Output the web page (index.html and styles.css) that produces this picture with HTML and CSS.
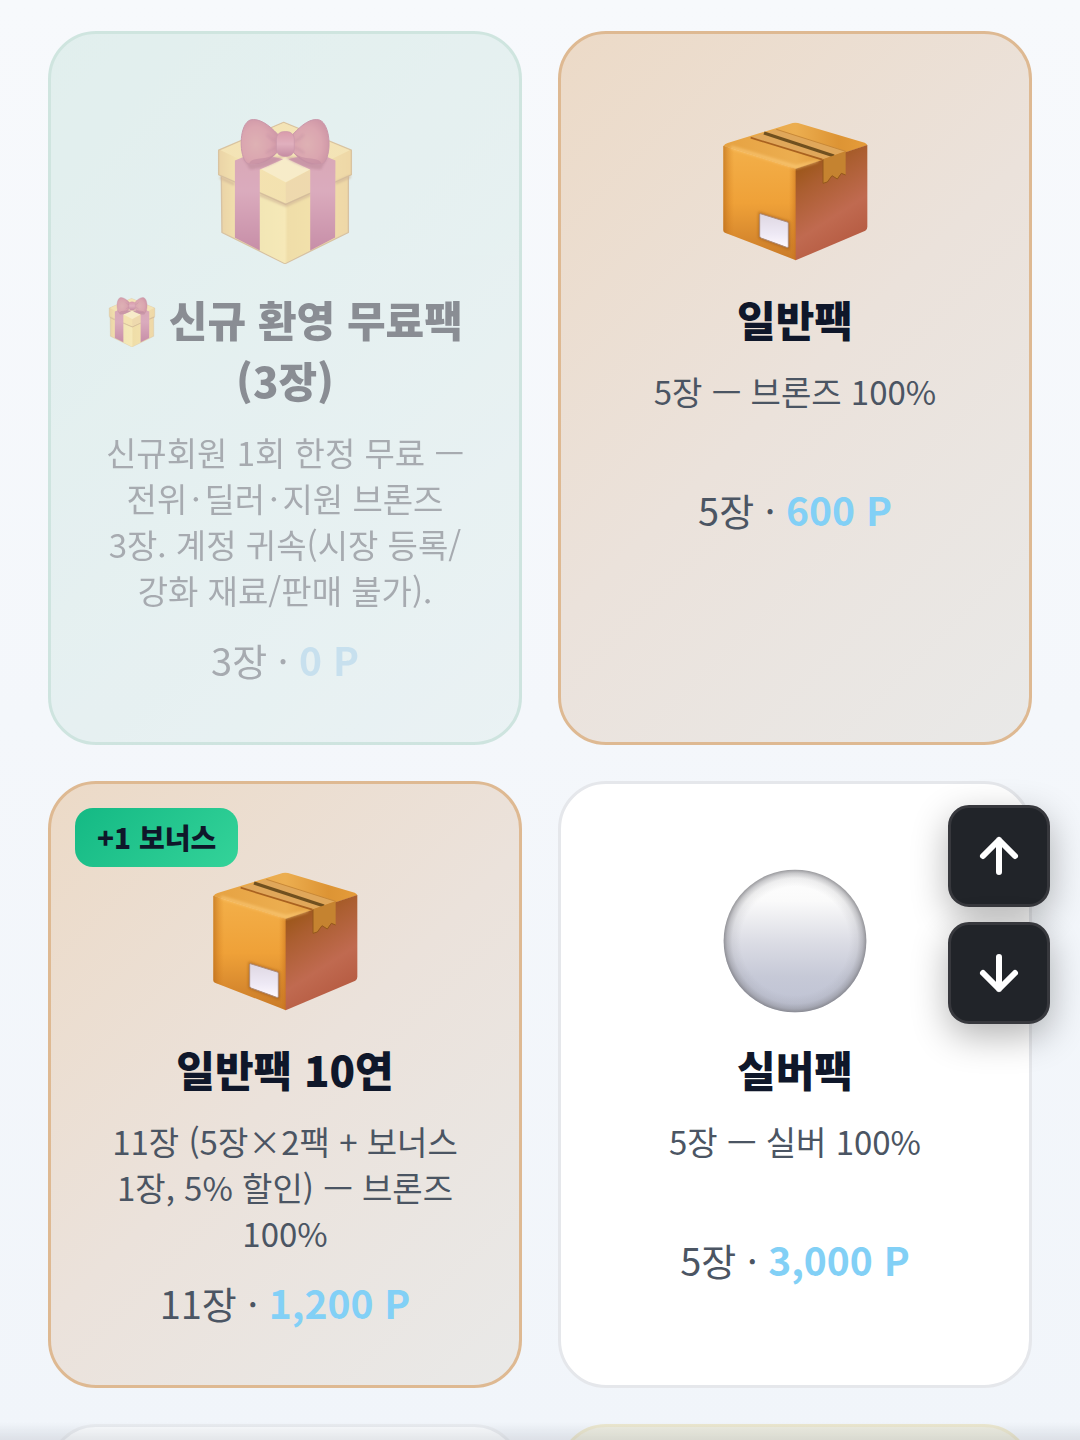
FILE: index.html
```html
<!DOCTYPE html>
<html lang="ko">
<head>
    <meta charset="UTF-8">
    <meta name="viewport" content="width=device-width, initial-scale=1.0">
    <title>팩 상점</title>
    <link rel="stylesheet" href="styles.css">
</head>
<body>
    <!-- Shared pack icons -->
    <svg class="icon-defs" width="0" height="0" aria-hidden="true">
        <defs>
            <linearGradient id="giftSide" x1="0" y1="0" x2="1" y2="0">
                <stop offset="0" stop-color="#e0b054"/>
                <stop offset=".15" stop-color="#f2cf66"/>
                <stop offset=".5" stop-color="#f3d26c"/>
                <stop offset="1" stop-color="#e8b854"/>
            </linearGradient>
            <linearGradient id="giftFront" x1="0" y1="0" x2="1" y2="0">
                <stop offset="0" stop-color="#efd570"/>
                <stop offset=".5" stop-color="#f6da76"/>
                <stop offset=".56" stop-color="#eac458"/>
                <stop offset="1" stop-color="#efca5c"/>
            </linearGradient>
            <linearGradient id="ribbon" x1="0" y1="0" x2="0" y2="1">
                <stop offset="0" stop-color="#bd5a74"/>
                <stop offset=".4" stop-color="#c06080"/>
                <stop offset="1" stop-color="#9a2757"/>
            </linearGradient>
            <radialGradient id="bowLeft" cx=".4" cy=".55" r=".65">
                <stop offset="0" stop-color="#c76c6e"/>
                <stop offset=".6" stop-color="#c05566"/>
                <stop offset="1" stop-color="#a63552"/>
            </radialGradient>
            <linearGradient id="knot" x1="0" y1="0" x2="0" y2="1">
                <stop offset="0" stop-color="#bd425e"/>
                <stop offset=".5" stop-color="#cc6a82"/>
                <stop offset="1" stop-color="#96234d"/>
            </linearGradient>
            <linearGradient id="boxLeft" x1="0" y1="0" x2="0" y2="1">
                <stop offset="0" stop-color="#f3b04a"/>
                <stop offset=".5" stop-color="#efa138"/>
                <stop offset="1" stop-color="#c97a28"/>
            </linearGradient>
            <linearGradient id="boxEdge" x1="0" y1="0" x2="1" y2="0">
                <stop offset="0" stop-color="#b36517" stop-opacity=".6"/>
                <stop offset=".15" stop-color="#d98321" stop-opacity="0"/>
                <stop offset=".9" stop-color="#d98321" stop-opacity="0"/>
                <stop offset="1" stop-color="#c56b18" stop-opacity=".55"/>
            </linearGradient>
            <linearGradient id="boxRight" x1=".2" y1="0" x2=".6" y2="1">
                <stop offset="0" stop-color="#94520c"/>
                <stop offset=".3" stop-color="#ab5e30"/>
                <stop offset=".65" stop-color="#c06a50"/>
                <stop offset="1" stop-color="#b4583f"/>
            </linearGradient>
            <linearGradient id="boxTop" x1="0" y1="0" x2="1" y2="0">
                <stop offset="0" stop-color="#e6a242"/>
                <stop offset=".5" stop-color="#ecae50"/>
                <stop offset=".8" stop-color="#dd9434"/>
                <stop offset="1" stop-color="#e59c3a"/>
            </linearGradient>
            <linearGradient id="boxLabel" x1="0" y1="0" x2="0" y2="1">
                <stop offset="0" stop-color="#ded7e2"/>
                <stop offset=".6" stop-color="#eee9f5"/>
                <stop offset="1" stop-color="#fffaff"/>
            </linearGradient>
            <linearGradient id="ballFill" x1="0" y1="0" x2="0" y2="1">
                <stop offset="0" stop-color="#ffffff"/>
                <stop offset=".22" stop-color="#fafafa"/>
                <stop offset=".5" stop-color="#dcdde5"/>
                <stop offset=".75" stop-color="#c6c9d7"/>
                <stop offset="1" stop-color="#bec2d3"/>
            </linearGradient>
            <radialGradient id="ballRim">
                <stop offset=".76" stop-color="#808086" stop-opacity="0"/>
                <stop offset=".88" stop-color="#808086" stop-opacity=".13"/>
                <stop offset=".95" stop-color="#808086" stop-opacity=".42"/>
                <stop offset="1" stop-color="#77777c" stop-opacity=".75"/>
            </radialGradient>
            <filter id="soften"><feGaussianBlur stdDeviation="4"/></filter>
        </defs>

        <symbol id="icon-gift" viewBox="36 52 440 440">
            <path fill="url(#giftSide)" stroke="#b98d4c" stroke-width="4" stroke-linejoin="round" d="M64 225 256 120 447 225V397L256 491 66 397Z"/>
            <path fill="url(#giftFront)" d="M176 275 257 315 334 275V449L256 490 176 449Z"/>
            <path fill="url(#giftSide)" stroke="#bd9048" stroke-width="4" stroke-linejoin="round" d="M56 149 252 65 456 149V223L258 312 56 223Z"/>
            <path fill="none" stroke="#a86f30" stroke-opacity=".65" stroke-width="9" filter="url(#soften)" d="M60 231 104 252M178 282 259 315 333 282M408 248 454 228"/>
            <path fill="#f2d072" d="M62 149 252 67 451 149 258 244Z"/>
            <path fill="#f2cc66" d="M180 205 258 247V308L180 273Z"/>
            <path fill="#e8bb62" d="M258 247 332 207V274L258 308Z"/>
            <path fill="#f8e098" d="M182 205 258 170 331 207 258 246Z"/>
            <path fill="url(#ribbon)" d="M105 180 165 155 250 176 180 207V451L105 413ZM408 180 350 155 266 176 332 207V451L407 412Z"/>
            <path fill="#8c2444" fill-opacity=".65" filter="url(#soften)" d="M128 170 150 207Q210 203 254 168 310 207 365 207L385 170Z"/>
            <path fill="url(#bowLeft)" stroke="#9d375a" stroke-width="3" d="M234 101C207 72 177 51 151 58 120 70 116 153 137 184 147 197 178 192 194 183 211 174 226 164 234 153Z"/>
            <path fill="url(#bowLeft)" stroke="#9d375a" stroke-width="3" d="M280 101C307 72 334 51 360 58 391 70 398 151 376 184 366 197 340 191 320 184 303 175 287 163 280 153Z"/>
            <path fill="#8f2248" fill-opacity=".6" d="M148 190Q150 177 180 174 210 174 231 157 210 183 176 191ZM366 190Q363 177 335 174 304 174 281 157 303 185 337 192Z"/>
            <path fill="none" stroke="#8f2248" stroke-opacity=".4" stroke-width="7" filter="url(#soften)" d="M231 122Q211 116 202 101M231 141Q211 147 200 158M283 122Q303 115 312 101M283 141Q303 147 313 158"/>
            <rect fill="url(#knot)" stroke="#9d375a" stroke-width="2" x="230" y="93" width="54" height="75" rx="22"/>
        </symbol>

        <symbol id="icon-box" viewBox="53 39 438 438">
            <path fill="url(#boxTop)" d="M58 123Q60 117 70 114L265 54Q273 52 281 54L481 113Q488 116 489 121L275 192Z"/>
            <path fill="url(#boxLeft)" d="M57 122 275 191V466L62 383Q57 381 57 375Z"/>
            <path fill="url(#boxEdge)" d="M57 122 275 191V466L62 383Q57 381 57 375Z"/>
            <path fill="url(#boxRight)" d="M274 191 489 120V366Q489 373 483 377L274 466Z"/>
            <path fill="#fccb78" fill-opacity=".75" filter="url(#soften)" d="M80 122 275 181 345 164 338 172 275 191 80 131Z"/>
            <path fill="#e0a75a" d="M139 98 216 73 424 139 356 163Z"/>
            <path fill="none" stroke="#a96220" stroke-width="5" d="M139 98 354 164"/>
            <path fill="none" stroke="#70501f" stroke-width="10" d="M179 84 389 153"/>
            <path fill="none" stroke="#c88837" stroke-width="3" d="M216 73 424 139"/>
            <path fill="#c58330" d="M356 163 424 139V210L411 205 399 222 383 212 369 231 356 235Z"/>
            <path fill="none" stroke="#94581c" stroke-width="3" d="M356 163V235L369 231 383 212 399 222 411 205 424 210"/>
            <path fill="#9a5718" fill-opacity=".7" filter="url(#soften)" d="M163 321 256 350V434L163 400Z"/>
            <path fill="url(#boxLabel)" stroke="#ae8b79" stroke-width="3" d="M168 326 249 351Q252 352 252 356V424Q252 429 247 427L170 399Q166 397 166 393V329Z"/>
        </symbol>

        <symbol id="icon-ball" viewBox="52 50 438 438">
            <circle cx="271" cy="269" r="214" fill="url(#ballFill)"/>
            <circle cx="271" cy="269" r="214" fill="url(#ballRim)"/>
        </symbol>
    </svg>

    <main class="pack-grid">
        <article class="pack pack-free disabled">
            <svg class="pack-icon" aria-hidden="true"><use href="#icon-gift"/></svg>
            <h2 class="pack-name"><svg class="name-icon" aria-hidden="true"><use href="#icon-gift"/></svg> 신규 환영 무료팩 (3장)</h2>
            <p class="pack-desc">신규회원 1회 한정 무료 — 전위<span class="dot">·</span>딜러<span class="dot">·</span>지원 브론즈 3장. 계정 귀속(시장 등록/강화 재료/판매 불가).</p>
            <p class="pack-price">3장 · <strong>0 P</strong></p>
        </article>

        <article class="pack pack-bronze">
            <svg class="pack-icon" aria-hidden="true"><use href="#icon-box"/></svg>
            <h2 class="pack-name">일반팩</h2>
            <p class="pack-desc">5장 — 브론즈 100%</p>
            <p class="pack-price">5장 · <strong>600 P</strong></p>
        </article>

        <article class="pack pack-bronze">
            <span class="badge">+1 보너스</span>
            <svg class="pack-icon" aria-hidden="true"><use href="#icon-box"/></svg>
            <h2 class="pack-name">일반팩 10연</h2>
            <p class="pack-desc">11장 (5장×2팩 + 보너스 1장, 5% 할인) — 브론즈 100%</p>
            <p class="pack-price">11장 · <strong>1,200 P</strong></p>
        </article>

        <article class="pack">
            <svg class="pack-icon" aria-hidden="true"><use href="#icon-ball"/></svg>
            <h2 class="pack-name">실버팩</h2>
            <p class="pack-desc">5장 — 실버 100%</p>
            <p class="pack-price">5장 · <strong>3,000 P</strong></p>
        </article>

        <!-- Next row, still fading in -->
        <article class="pack entering"></article>
        <article class="pack pack-gold entering"></article>
    </main>

    <div class="scroll-buttons">
        <button type="button" class="scroll-button" aria-label="위로">
            <svg viewBox="0 0 48 48" aria-hidden="true"><path d="M24 40V8M8 24 24 8l16 16"/></svg>
        </button>
        <button type="button" class="scroll-button" aria-label="아래로">
            <svg viewBox="0 0 48 48" aria-hidden="true"><path d="M24 8v32M8 24l16 16 16-16"/></svg>
        </button>
    </div>

    <div class="bottom-shade"></div>
</body>
</html>
```
FILE: styles.css
```css
* {
    box-sizing: border-box;
}

body {
    margin: 0;
    font-family: "Noto Sans CJK KR", "Noto Sans", sans-serif;
    color: #0f172a;
    background: linear-gradient(180deg, #f7f9fc, #f1f5fa);
}

.icon-defs {
    position: absolute;
}

/* Pack cards */
.pack-grid {
    display: grid;
    grid-template-columns: 1fr 1fr;
    grid-auto-rows: max-content;
    gap: 36px;
    height: 100vh;
    padding: 31px 48px 0;
    overflow: hidden;
}

.pack {
    position: relative;
    min-height: 600px;
    padding: 48px 48px 50px;
    border: 3px solid #e5e7eb;
    border-radius: 48px;
    background: #fff;
    text-align: center;
    word-break: keep-all;
}

.pack-free {
    border-color: #a9d2c4;
    background: linear-gradient(135deg, #cde6e0, #e1eeee);
}

.pack-bronze {
    border-color: #deb992;
    background: linear-gradient(135deg, #ecdac7, #ebe2db 50%, #e9e9e8);
}

.pack-gold {
    border-color: #e8dfb4;
    background: #ece8d2;
}

.disabled {
    opacity: 0.5;
}

.entering {
    opacity: 0.6;
}

.pack-icon {
    display: block;
    width: 146px;
    height: 146px;
    margin: 36px auto 24px;
}

.pack-name {
    margin: 0 0 19px;
    font-size: 42px;
    line-height: 61px;
    font-weight: 800;
}

.name-icon {
    width: 50px;
    height: 50px;
    vertical-align: -10px;
}

.pack-desc {
    min-height: 95px;
    margin: 0 0 14px;
    font-size: 33px;
    line-height: 46px;
    color: #4b5563;
}

.dot {
    margin: 0 4px;
}

.pack-price {
    margin: 0;
    font-size: 38px;
    line-height: 64px;
    color: #4b5563;
}

.pack-price strong {
    font-size: 39px;
    color: #82d0f6;
}

.disabled .pack-name {
    color: #20242e;
}

.disabled .pack-desc,
.disabled .pack-price {
    color: #5b6067;
}

.disabled .pack-price strong {
    color: #9ccae2;
}

.badge {
    position: absolute;
    top: 24px;
    left: 24px;
    padding: 0 22px;
    border-radius: 18px;
    background: linear-gradient(135deg, #14b984, #34d399);
    font-size: 28px;
    line-height: 59px;
    font-weight: 800;
}

/* Floating scroll buttons */
.scroll-buttons {
    position: fixed;
    right: 30px;
    bottom: 416px;
    display: flex;
    flex-direction: column;
    gap: 15px;
}

.scroll-button {
    display: flex;
    align-items: center;
    justify-content: center;
    width: 102px;
    height: 102px;
    padding: 0;
    border: 3px solid #37383d;
    border-radius: 21px;
    background: #212429;
    box-shadow: 0 12px 36px rgba(0, 0, 0, 0.3);
    cursor: pointer;
}

.scroll-button svg {
    width: 48px;
    height: 48px;
    fill: none;
    stroke: #fff;
    stroke-width: 6;
    stroke-linecap: round;
    stroke-linejoin: round;
}

.bottom-shade {
    position: fixed;
    right: 0;
    bottom: 0;
    left: 0;
    height: 18px;
    background: linear-gradient(180deg, rgba(15, 23, 42, 0), rgba(15, 23, 42, 0.09));
}
```
